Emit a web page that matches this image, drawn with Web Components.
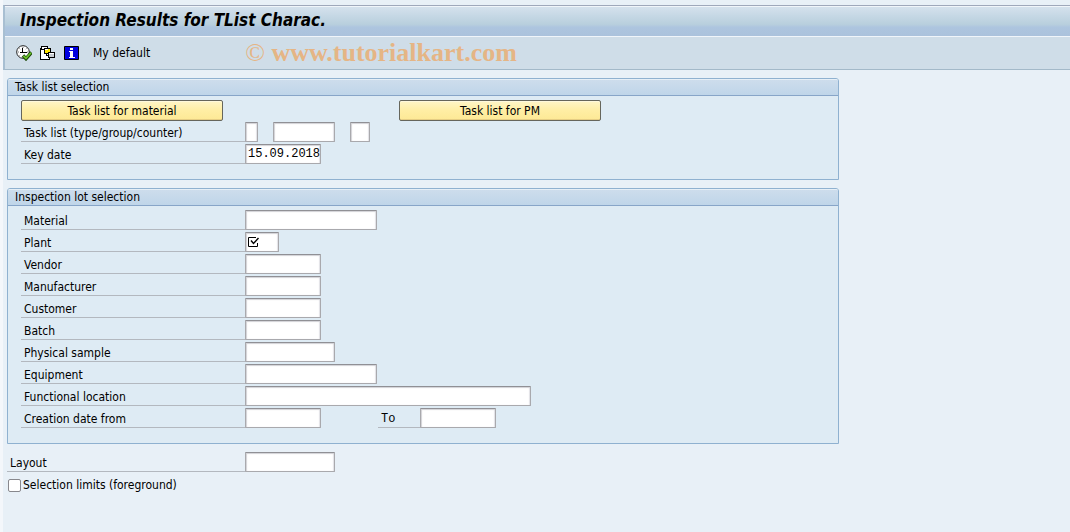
<!DOCTYPE html>
<html lang="en">
<head>
<meta charset="utf-8">
<title>Inspection Results for TList Charac.</title>
<style>
    body {
        margin: 0;
        min-height: 100vh;
        background: #e8f0f7;
        color: #000;
        font: 12px/16px "DejaVu Sans Condensed", "DejaVu Sans", sans-serif;
    }
</style>
</head>
<body>
<sap-window>
    <sap-titlebar slot="title">Inspection Results for TList Charac.</sap-titlebar>
    <sap-toolbar slot="toolbar">
        <sap-tool icon="execute" name="Execute"></sap-tool>
        <sap-tool icon="variant" name="Get variant"></sap-tool>
        <sap-tool icon="info" name="Information"></sap-tool>
        <sap-tool>My default</sap-tool>
        <sap-watermark slot="mark">www.tutorialkart.com</sap-watermark>
    </sap-toolbar>

    <sap-group caption="Task list selection">
        <sap-actions>
            <sap-button>Task list for material</sap-button>
            <sap-button>Task list for PM</sap-button>
        </sap-actions>
        <sap-field label="Task list (type/group/counter)" size="13">
            <sap-entry name="Task list group" size="62"></sap-entry>
            <sap-entry name="Group counter" size="20"></sap-entry>
        </sap-field>
        <sap-field label="Key date" size="76" value="15.09.2018"></sap-field>
    </sap-group>

    <sap-group caption="Inspection lot selection">
        <sap-field label="Material" size="132"></sap-field>
        <sap-field label="Plant" size="34" required></sap-field>
        <sap-field label="Vendor" size="76"></sap-field>
        <sap-field label="Manufacturer" size="76"></sap-field>
        <sap-field label="Customer" size="76"></sap-field>
        <sap-field label="Batch" size="76"></sap-field>
        <sap-field label="Physical sample" size="90"></sap-field>
        <sap-field label="Equipment" size="132"></sap-field>
        <sap-field label="Functional location" size="286"></sap-field>
        <sap-field label="Creation date from" size="76">
            <sap-field class="to" label="To" size="76"></sap-field>
        </sap-field>
    </sap-group>

    <sap-options>
        <sap-field class="wide" label="Layout" size="90"></sap-field>
        <sap-check label="Selection limits (foreground)"></sap-check>
    </sap-options>
</sap-window>

<script>
const ICONS = {
    execute: `
        <circle cx="7" cy="7" r="6.3" fill="#fff" stroke="#222"/>
        <path d="M7 2v1M7 11v1M2 7h1M11 7h1M3.5 3.5l.7.7M10.5 3.5l-.7.7M3.5 10.5l.7-.7" stroke="#777"/>
        <path d="M6.5 3v5M4 7.5h7" fill="none" stroke="#000" shape-rendering="crispEdges"/>
        <path d="M7 10.5l3 3.2 5.5-6.2" fill="none" stroke="#1d4a08" stroke-width="3.4"/>
        <path d="M7.4 10.8l2.6 2.5 5-5.6" fill="none" stroke="#6cc52c" stroke-width="1.7"/>`,
    variant: `
        <g shape-rendering="crispEdges" stroke="#000">
            <path d="M.5 3.5v11h9v-11z" fill="#fff"/>
            <path d="M1.5 1.5h6v3h-6z" fill="#fff"/>
            <path d="M4.5 3.5h6v5h-6z" fill="#ffe600"/>
            <path d="M5 4.5h3" stroke="#fff"/>
            <path d="M8.5 7.5h6v5h-6z" fill="#c8cdd2"/>
            <path d="M9 8.5h5" stroke="#fff"/>
            <path d="M6.5 9v1.5h2" fill="none"/>
        </g>`,
    info: `
        <path d="M.5 1.5h14v13H.5z" fill="#0000e0" stroke="#000"/>
        <path d="M6 3h3v2H6zM5 6h4v6h2v1H5v-1h1V7H5z" fill="#fff" shape-rendering="crispEdges"/>`
};

const INPUT_STYLE = `
    input {
        box-sizing: border-box;
        height: 20px;
        margin: 0;
        padding: 0 0 0 2px;
        border: 1px solid #a9a9ad;
        border-top-color: #909095;
        border-radius: 1px;
        background: #fff;
        box-shadow: inset 1px 1px 1px #d2d2d6, inset -1px 0 1px #e2e2e6;
        color: #000;
        font: 12px/16px "Liberation Mono", monospace;
        outline: none;
    }
`;

class SapElement extends HTMLElement {
    constructor() {
        super();
        this._shadowRoot = this.attachShadow({mode: "open"});
    }

    connectedCallback() {
        this._shadowRoot.innerHTML = this.render();
    }
}


class SapWindow extends SapElement {
    render() {
        return `
            <style>
            :host {
                display: block;
                padding: 5px 0 0 3px;
                background: linear-gradient(90deg, #f4f7fb 3px, transparent 3px);
                min-height: 100vh;
                box-sizing: border-box;
            }

            header {
                border: solid #a3b9c9;
                border-width: 1px 0 1px 2px;
                border-top-color: #9fa8bb;
                border-left-color: #a8bfd2;
            }

            main {
                display: flex;
                flex-flow: column;
                gap: 8px;
                max-width: 832px;
                padding: 8px 4px;
            }
            </style>
            <header>
                <slot name="title"></slot>
                <slot name="toolbar"></slot>
            </header>
            <main><slot></slot></main>
        `;
    }
}


class SapTitlebar extends SapElement {
    render() {
        return `
            <style>
            :host {
                display: block;
                border: solid #f0f5fa;
                border-width: 1px 0;
                background: linear-gradient(#d4e1ed, #b8cfdd 60%, #adc5df 70%, #abc2dc);
            }

            h1 {
                margin: 0;
                padding: 0 15px 2px;
                font: italic bold 17px/27px "DejaVu Sans Condensed", "DejaVu Sans", sans-serif;
            }
            </style>
            <h1><slot></slot></h1>
        `;
    }
}


class SapToolbar extends SapElement {
    render() {
        return `
            <style>
            :host {
                display: flex;
                align-items: center;
                gap: 90px;
                height: 32px;
                padding: 0 11px;
                background: #cfdde8;
            }

            div {
                display: flex;
                align-items: center;
                gap: 8px;
            }
            </style>
            <div><slot></slot></div>
            <slot name="mark"></slot>
        `;
    }
}


class SapTool extends SapElement {
    render() {
        const icon = ICONS[this.getAttribute("icon")];
        const name = this.getAttribute("name");
        return `
            <style>
            :host {
                display: block;
            }

            button {
                display: block;
                margin: 0;
                padding: 0;
                border: 0;
                background: none;
                color: inherit;
                font: inherit;
            }

            .text {
                padding: 0 5px;
            }

            svg {
                display: block;
            }
            </style>
            ${icon
                ? `<button aria-label="${name}"><svg width="16" height="16" viewBox="0 0 16 16">${icon}</svg></button>`
                : `<button class="text"><slot></slot></button>`}
        `;
    }
}


class SapWatermark extends SapElement {
    render() {
        return `
            <style>
            :host {
                display: block;
                color: #e5b585;
                font: bold 26px/28px "Liberation Serif", serif;
                white-space: nowrap;
            }

            span {
                font-weight: normal;
            }
            </style>
            <span>©</span> <slot></slot>
        `;
    }
}


class SapGroup extends SapElement {
    render() {
        return `
            <style>
            :host {
                display: block;
            }

            section {
                border: 1px solid #8fb1d0;
                border-radius: 3px 3px 0 0;
                background: #deebf4;
            }

            h2 {
                margin: 0;
                padding: 0 7px;
                border-bottom: 1px solid #87a5c8;
                border-radius: 2px 2px 0 0;
                background: linear-gradient(#e6eff7 1px, #cdddec 1px, #bfd5e9);
                font: inherit;
            }

            div {
                padding: 4px 13px 13px;
            }
            </style>
            <section>
                <h2>${this.getAttribute("caption")}</h2>
                <div><slot></slot></div>
            </section>
        `;
    }
}


class SapActions extends SapElement {
    render() {
        return `
            <style>
            :host {
                display: flex;
                gap: 176px;
                height: 22px;
            }
            </style>
            <slot></slot>
        `;
    }
}


class SapButton extends SapElement {
    render() {
        return `
            <style>
            :host {
                display: block;
                flex: 0 1 202px;
            }

            button {
                display: block;
                width: 100%;
                height: 21px;
                padding: 0;
                border: 1px solid #66665c;
                border-radius: 2px;
                background: linear-gradient(#fff6c8, #ffeea4 50%, #fde995);
                box-shadow: inset 0 1px #fff9dc, inset 0 -1px #e5cd83;
                color: inherit;
                font: inherit;
            }
            </style>
            <button><slot></slot></button>
        `;
    }
}


class SapEntry extends SapElement {
    render() {
        return `
            <style>
            :host {
                display: block;
            }

            ${INPUT_STYLE}

            input {
                display: block;
            }
            </style>
            <input type="text" aria-label="${this.getAttribute("name")}" style="width: ${this.getAttribute("size")}px">
        `;
    }
}


class SapField extends SapElement {
    render() {
        const mark = `
            <svg width="12" height="12" viewBox="0 0 12 12" aria-hidden="true">
                <path d="M8 1.5H.5v9h9V7" fill="none" stroke="#000"/>
                <path d="M3 4.5l2.5 3 5-5.5" fill="none" stroke="#000" stroke-width="1.4"/>
            </svg>`;
        return `
            <style>
            :host {
                display: flex;
                align-items: flex-start;
                gap: 15px;
                height: 22px;
            }

            .pair {
                display: flex;
                position: relative;
            }

            label {
                box-sizing: border-box;
                width: 224px;
                height: 20px;
                padding: 3px 3px 0;
                border-bottom: 1px solid #b3b8bf;
                white-space: nowrap;
            }

            :host(.wide) label {
                width: 238px;
            }

            /* second half of a from/to range */
            :host(.to) {
                margin-left: 42px;
            }

            :host(.to) label {
                width: 42px;
                font: 12px/16px "Liberation Mono", monospace;
            }

            ${INPUT_STYLE}

            svg {
                position: absolute;
                right: 19px;
                top: 4px;
            }
            </style>
            <div class="pair">
                <label for="field">${this.getAttribute("label")}</label>
                <input id="field" type="text" value="${this.getAttribute("value") || ""}"
                    style="width: ${this.getAttribute("size")}px">
                ${this.hasAttribute("required") ? mark : ""}
            </div>
            <slot></slot>
        `;
    }
}


class SapOptions extends SapElement {
    render() {
        return `
            <style>
            :host {
                display: block;
            }
            </style>
            <slot></slot>
        `;
    }
}


class SapCheck extends SapElement {
    render() {
        return `
            <style>
            :host {
                display: block;
            }

            label {
                display: inline-flex;
                align-items: center;
                gap: 2px;
                height: 22px;
                padding-left: 1px;
            }

            input {
                appearance: none;
                width: 13px;
                height: 13px;
                margin: 0;
                border: 1px solid #88888d;
                border-radius: 2px;
                background: #fff;
            }

            input:checked {
                background: #5b7fa5;
            }
            </style>
            <label><input type="checkbox">${this.getAttribute("label")}</label>
        `;
    }
}


customElements.define("sap-window", SapWindow);
customElements.define("sap-titlebar", SapTitlebar);
customElements.define("sap-toolbar", SapToolbar);
customElements.define("sap-tool", SapTool);
customElements.define("sap-watermark", SapWatermark);
customElements.define("sap-group", SapGroup);
customElements.define("sap-actions", SapActions);
customElements.define("sap-button", SapButton);
customElements.define("sap-entry", SapEntry);
customElements.define("sap-field", SapField);
customElements.define("sap-options", SapOptions);
customElements.define("sap-check", SapCheck);
</script>
</body>
</html>
